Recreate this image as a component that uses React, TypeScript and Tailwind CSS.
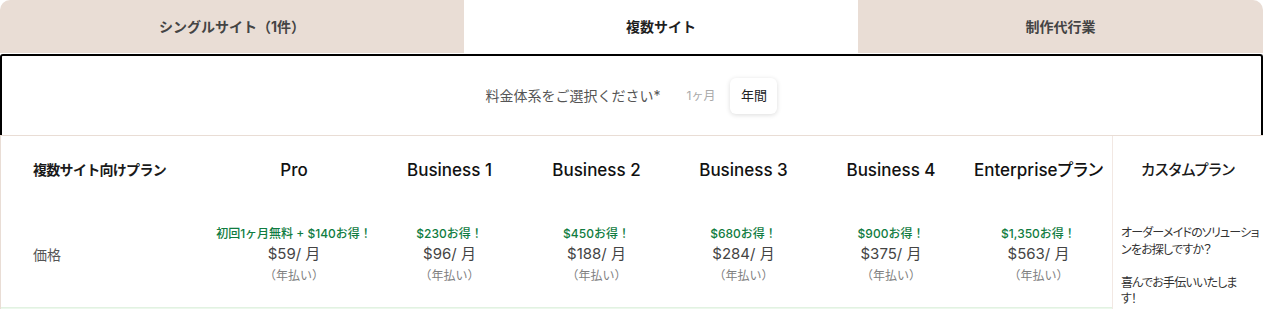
const plans = [
  { name: "Pro", promo: "初回1ヶ月無料 + $140お得！", price: "$59" },
  { name: "Business 1", promo: "$230お得！", price: "$96" },
  { name: "Business 2", promo: "$450お得！", price: "$188" },
  { name: "Business 3", promo: "$680お得！", price: "$284" },
  { name: "Business 4", promo: "$900お得！", price: "$375" },
  { name: "Enterpriseプラン", promo: "$1,350お得！", price: "$563" },
];

export default function App() {
  return (
    <div className="w-[1263px] h-[309px] overflow-hidden bg-white font-['Inter','Noto_Sans_CJK_JP',sans-serif]">
      {/* Tabs */}
      <div className="flex h-[53px]">
        <div className="w-[464px] bg-[#e9ddd5] rounded-tl-[10px] flex items-center justify-center text-[14px] font-bold text-[#444]">
          シングルサイト（1件）
        </div>
        <div className="w-[394px] bg-white flex items-center justify-center text-[14px] font-bold text-[#1f1f1f]">
          複数サイト
        </div>
        <div className="flex-1 bg-[#e9ddd5] rounded-tr-[10px] flex items-center justify-center text-[14px] font-bold text-[#444]">
          制作代行業
        </div>
      </div>

      {/* Billing selector */}
      <div className="mt-px h-[81px] border-2 border-b-0 border-black rounded-t-[3px] flex items-center justify-center">
        <span className="text-[14px] text-[#555] mr-[14px]">料金体系をご選択ください*</span>
        <div className="flex items-center gap-[3px]">
          <button className="px-[12px] h-[36px] text-[12px] text-[#aaa]">1ヶ月</button>
          <button className="w-[47px] h-[36px] rounded-[6px] bg-white text-[13px] text-[#222] shadow-[0_1px_5px_rgba(0,0,0,0.14)]">
            年間
          </button>
        </div>
      </div>

      {/* Table */}
      <div className="flex border-t border-l border-[#e9ddd5]">
        <div className="grid grid-cols-[211px_164px_147px_147px_147px_148px_147px] grid-rows-[66px_105px_40px]">
          <div className="flex items-center pl-[32px] text-[14px] font-bold text-[#1a1a1a] tracking-[-0.7px]">複数サイト向けプラン</div>
          {plans.map((p) => (
            <div key={p.name} className="flex items-center justify-center pt-[4px] text-[17px] font-medium text-[#111] whitespace-nowrap [font-feature-settings:'palt']">
              {p.name}
            </div>
          ))}

          <div className="flex items-center pl-[32px] text-[14px] text-[#555]">価格</div>
          {plans.map((p) => (
            <div key={p.name + "-price"} className="flex flex-col items-center justify-center whitespace-nowrap">
              <span className="text-[12px] leading-[16px] font-medium text-[#107c41]">{p.promo}</span>
              <span className="mt-[2px] text-[15px] leading-[20px] text-[#444]">{p.price}/ 月</span>
              <span className="mt-[4px] text-[12px] leading-[16px] text-[#808080]">（年払い）</span>
            </div>
          ))}

          <div className="col-span-7 bg-[#ecf8ec] border-t border-[#e2f2e2]"></div>
        </div>

        <div className="flex-1 border-l border-[#f2e8e3] flex flex-col">
          <div className="h-[66px] flex items-center justify-center pt-[2px] text-[15px] font-medium text-[#1a1a1a] [font-feature-settings:'palt']">
            カスタムプラン
          </div>
          <div className="pl-[8px] pt-[23px] text-[12px] leading-[16.5px] text-[#333] whitespace-nowrap tracking-[-0.8px] [font-feature-settings:'palt']">
            <div>オーダーメイドのソリューショ</div>
            <div>ンをお探しですか？</div>
            <div className="h-[16.5px]"></div>
            <div>喜んでお手伝いいたしま</div>
            <div>す！</div>
          </div>
        </div>
      </div>
    </div>
  );
}
